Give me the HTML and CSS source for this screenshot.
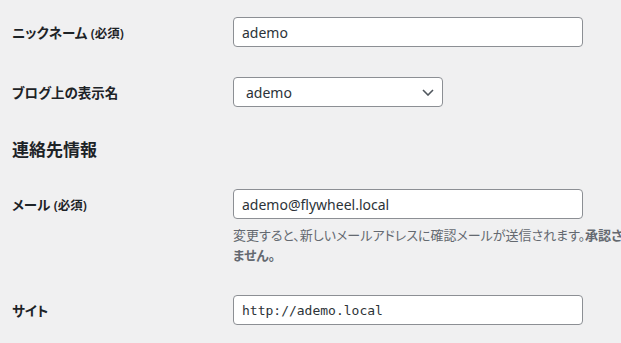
FILE: index.html
```html
<!DOCTYPE html>
<html lang="ja">
<head>
    <meta charset="UTF-8">
    <meta name="viewport" content="width=device-width, initial-scale=1.0">
    <title>プロフィール</title>
    <link rel="stylesheet" href="styles.css">
</head>
<body>
    <div class="profile">
        <!-- Nickname -->
        <div class="form-row">
            <label class="row-label" for="nickname">ニックネーム <span class="required">(必須)</span></label>
            <div class="row-field">
                <input class="text-input" id="nickname" type="text" value="ademo">
            </div>
        </div>

        <!-- Display name -->
        <div class="form-row">
            <label class="row-label">ブログ上の表示名</label>
            <div class="row-field">
                <div class="select-box">
                    <span>ademo</span>
                    <svg width="12" height="7" viewBox="0 0 12 7"><path d="M1 1l5 5 5-5" fill="none" stroke="#50575e" stroke-width="1.6"/></svg>
                </div>
            </div>
        </div>

        <h2 class="section-title">連絡先情報</h2>

        <!-- Email -->
        <div class="form-row">
            <label class="row-label" for="email">メール <span class="required">(必須)</span></label>
            <div class="row-field">
                <input class="text-input" id="email" type="text" value="ademo@flywheel.local">
                <p class="description">変更すると、新しいメールアドレスに確認メールが送信されます。<strong>承認されるまで新しいアドレスは有効になりません。</strong></p>
            </div>
        </div>

        <!-- Site -->
        <div class="form-row">
            <label class="row-label" for="url">サイト</label>
            <div class="row-field">
                <input class="text-input code" id="url" type="text" value="http://ademo.local">
            </div>
        </div>
    </div>
</body>
</html>
```

FILE: styles.css
```css
/* General Styles */
html {
    overflow: hidden;
}

body {
    margin: 0;
    background: #f0f0f1;
    color: #1d2327;
    font-family: 'Noto Sans', 'Noto Sans CJK JP', sans-serif;
    font-size: 14px;
    font-feature-settings: "palt";
}

.profile {
    padding: 2px 0 0 12px;
    width: 960px;
}

/* Form Rows */
.form-row {
    display: grid;
    grid-template-columns: 221px 1fr;
    padding: 15px 0;
}

.row-label {
    padding-top: 6px;
    line-height: 20px;
    font-weight: bold;
    font-size: 13.5px;
}

.row-label .required {
    font-size: 12.5px;
    font-weight: 600;
}

/* Inputs */
.text-input {
    box-sizing: border-box;
    display: block;
    width: 350px;
    height: 30px;
    margin: 0;
    padding: 0 8px;
    border: 1px solid #8c8f94;
    border-radius: 4px;
    background: #fff;
    color: #2c3338;
    font-family: inherit;
    font-size: 14px;
}

.text-input.code {
    font-family: 'DejaVu Sans Mono', monospace;
    font-size: 13px;
}

.select-box {
    box-sizing: border-box;
    display: flex;
    align-items: center;
    justify-content: space-between;
    width: 210px;
    height: 30px;
    padding: 0 8px 0 12px;
    border: 1px solid #8c8f94;
    border-radius: 4px;
    background: #fff;
    color: #2c3338;
}

/* Section Heading */
.section-title {
    margin: 16px 0 12px;
    font-size: 17px;
    line-height: 24px;
    font-weight: bold;
    color: #1d2327;
}

.description {
    margin: 6px 0 0;
    width: 602px;
    line-height: 20px;
    font-size: 13px;
    color: #646970;
}

.description strong {
    font-weight: 600;
}
```
